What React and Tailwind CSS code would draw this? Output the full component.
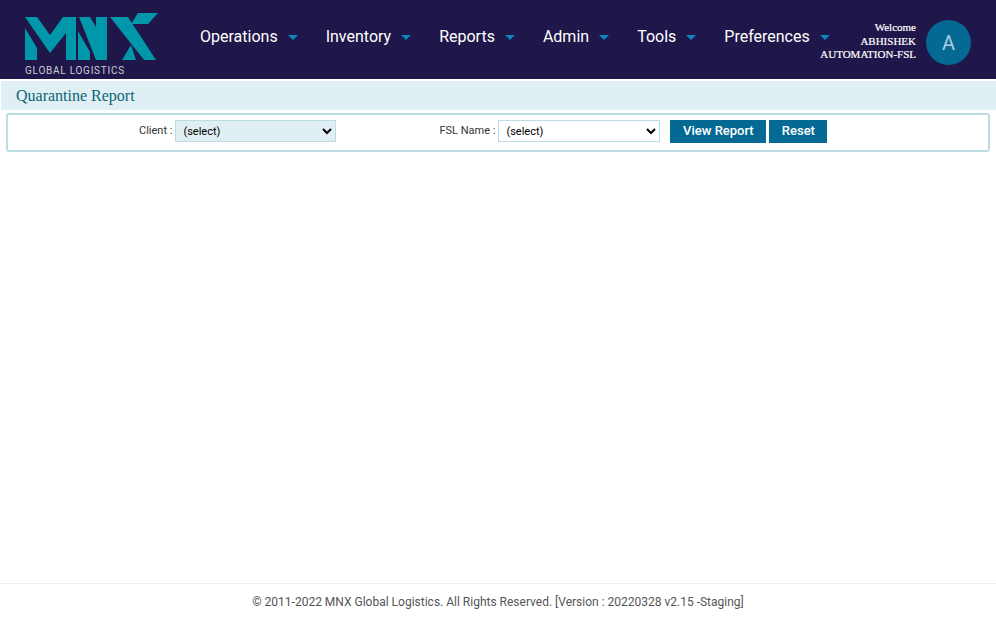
import React from 'react';

const menu = ['Operations', 'Inventory', 'Reports', 'Admin', 'Tools', 'Preferences'];

function Logo() {
  return (
    <div className="w-[134px] shrink-0">
      <svg width="134" height="47" viewBox="25 13 134 47" className="block">
        <g fill="#0097ab">
          {/* M */}
          <path d="M25 28L37 48V60H25Z" />
          <path d="M25 17H37L50 35L63 17H76V60H66V33L50 53Z" />
          {/* N */}
          <path d="M78 31L90 52V60H78Z" />
          <path d="M79 17H90L96 27V17H107V60H96Z" />
          {/* X */}
          <path d="M110 17H128L156 60H144Z" />
          <path d="M122 60L131 45L136 60Z" />
          <path d="M138 13H158L148 24H131Z" />
        </g>
      </svg>
      <div className="mt-[5px] text-[10px] leading-[11px] tracking-[0.75px] text-[#cfcfd6] whitespace-nowrap">GLOBAL LOGISTICS</div>
    </div>
  );
}

export default function App() {
  return (
    <div className="min-h-[621px] flex flex-col bg-white font-['Roboto',sans-serif]">
      <header className="h-[79px] bg-[#1f1649] flex items-start pr-[25px]">
        <div className="pl-[25px] pt-[13px] w-[200px] shrink-0">
          <Logo />
        </div>
        <nav className="flex items-center gap-[28px] h-[73px] shrink-0">
          {menu.map((item) => (
            <div key={item} className="flex items-center">
              <span className="text-white text-base leading-6">{item}</span>
              <span className="ml-[10px] mt-[2px] w-0 h-0 border-x-[5px] border-x-transparent border-t-[5px] border-t-[#0d86c0]"></span>
            </div>
          ))}
        </nav>
        <div className="ml-auto w-[86px] h-[83px] flex flex-col justify-center items-end whitespace-nowrap text-white text-[11px] leading-[13.5px] font-['Liberation_Serif',serif] [-webkit-text-stroke:0.2px_white]">
          <span>Welcome</span>
          <span>ABHISHEK</span>
          <span>AUTOMATION-FSL</span>
        </div>
        <div className="ml-[10px] mt-[20px] w-[45px] h-[45px] rounded-full bg-[#046a94] text-[#a9cfe6] text-xl flex items-center justify-center">A</div>
      </header>

      <div className="mt-[2px] ml-[1px] h-[29px] bg-[#e0eff3] flex items-center pl-[15px]">
        <h1 className="text-[#0a6478] text-base font-['Liberation_Serif',serif]">Quarantine Report</h1>
      </div>

      <div className="mt-[3px] mx-[6px] h-[39px] border-2 border-[#b9dde2] rounded-[3px] flex items-start pt-[5px] text-[11px] leading-[20px] text-[#333]">
        <label className="ml-[131px] mr-[3px] mt-[1px] whitespace-nowrap">Client :</label>
        <select className="w-[161px] h-[22px] bg-[#e0eff3] border border-[#b9dde2] text-[11px] text-black pl-[3px]">
          <option>(select)</option>
        </select>
        <label className="ml-[103px] mr-[3px] mt-[1px] whitespace-nowrap">FSL Name :</label>
        <select className="w-[162px] h-[22px] bg-white border border-[#b9dde2] text-[11px] text-black pl-[3px]">
          <option>(select)</option>
        </select>
        <button className="ml-[10px] w-[96px] h-[23px] pb-[1px] bg-[#046a94] text-white text-[13px] font-medium">View Report</button>
        <button className="ml-[3px] w-[58px] h-[23px] pb-[1px] bg-[#046a94] text-white text-[13px] font-medium">Reset</button>
      </div>

      <div className="flex-1"></div>

      <footer className="h-[38px] pb-[2px] border-t border-[#eeeeee] flex items-center justify-center text-xs text-[#555]">
        © 2011-2022 MNX Global Logistics. All Rights Reserved. [Version : 20220328 v2.15 -Staging]
      </footer>
    </div>
  );
}
